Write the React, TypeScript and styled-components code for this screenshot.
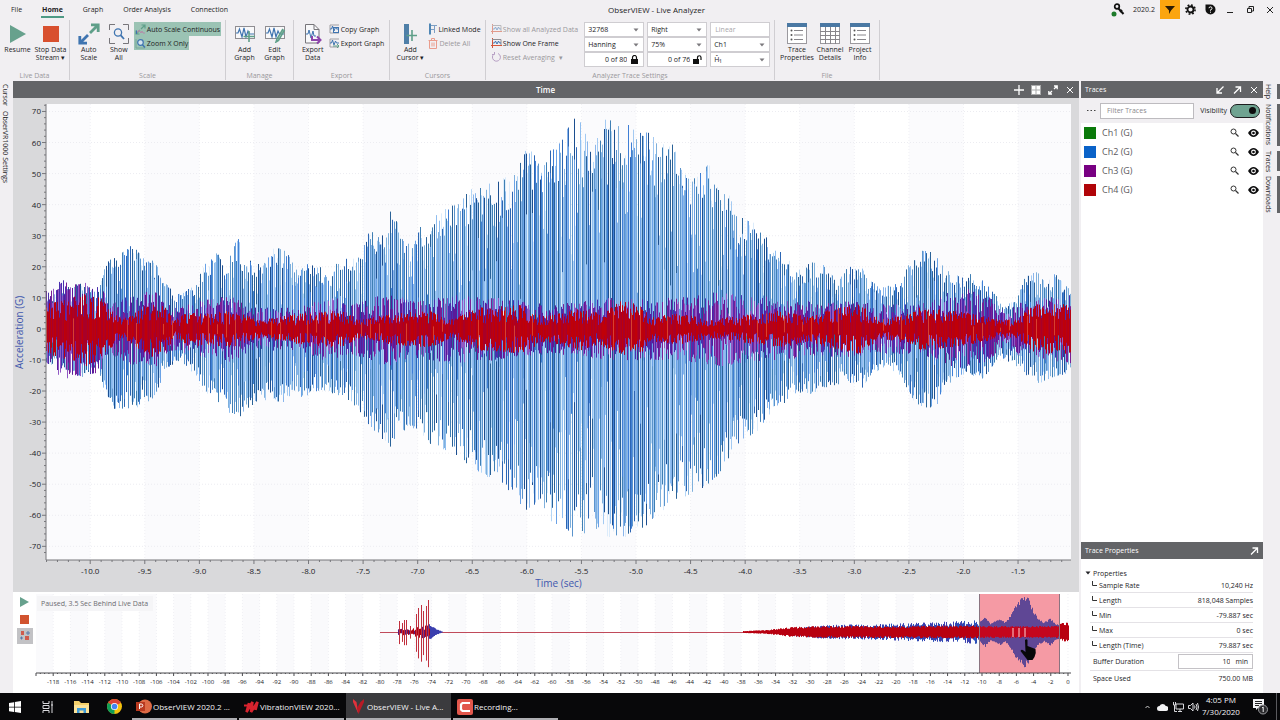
import React from "react";
import styled, { createGlobalStyle, css } from "styled-components";

const GlobalStyle = createGlobalStyle`
  *, *::before, *::after { box-sizing: border-box; }
  body { margin: 0; background: #f1eff2; }
  body, button, input, select { font-family: "Open Sans", "Noto Sans", sans-serif; }
  button, input, select { color: inherit; margin: 0; }
  button { border: 0; padding: 0; background: none; cursor: pointer; }
  svg { display: block; flex: none; }
`;

/* ---------- waveform data ---------- */

type Key = [number, number];

const random = (seed: number) => {
  let s = seed;
  return () => {
    s = (s * 1664525 + 1013904223) >>> 0;
    return s / 4294967296;
  };
};

const sample = (keys: Key[], x: number) => {
  for (let i = 1; i < keys.length; i++) {
    const [x0, v0] = keys[i - 1];
    const [x1, v1] = keys[i];
    if (x <= x1) return v0 + ((v1 - v0) * Math.max(0, x - x0)) / (x1 - x0);
  }
  return keys[keys.length - 1][1];
};

interface BarOptions {
  from: number;
  to: number;
  step: number;
  center: number;
  scale: number;
  top: Key[];
  bottom?: Key[];
  jitter: number;
  seed: number;
  colors: string[];
}

/* One vertical stroke per sample, grouped into a path for each colour. */
const makeBars = (o: BarOptions) => {
  const rnd = random(o.seed);
  const paths = o.colors.map(() => "");
  for (let x = o.from; x < o.to; x += o.step) {
    const a = sample(o.top, x) * (1 - o.jitter * Math.pow(rnd(), 1.4)) * o.scale;
    const b = sample(o.bottom || o.top, x) * (1 - o.jitter * Math.pow(rnd(), 1.4)) * o.scale;
    const c = Math.floor(rnd() * o.colors.length);
    paths[c] += `M${x + 0.5} ${(o.center - a).toFixed(1)}V${(o.center + b).toFixed(1)}`;
  }
  return paths.map((d, i) => ({ d, color: o.colors[i] }));
};

const CH2_TOP: Key[] = [
  [0, 10], [24, 14], [34, 15], [52, 12], [61, 23], [74, 24], [84, 28], [99, 24], [110, 21], [119, 15], [129, 11],
  [139, 12], [149, 15], [159, 21], [171, 25], [180, 20], [191, 30], [199, 22], [209, 22], [216, 20], [225, 26],
  [237, 26], [246, 22], [254, 19], [264, 22], [274, 20], [282, 16], [290, 21], [304, 24], [314, 23], [321, 33],
  [334, 29], [342, 38], [348, 38], [354, 32], [366, 28], [374, 33], [382, 31], [390, 39], [399, 40], [409, 41],
  [424, 45], [441, 49], [454, 49], [466, 49], [474, 54], [482, 60], [494, 59], [510, 58], [520, 64], [530, 69],
  [534, 67], [546, 57], [556, 66], [560, 70], [566, 67], [586, 67], [599, 65], [614, 59], [622, 62], [636, 54],
  [644, 48], [654, 51], [662, 55], [669, 46], [679, 46], [691, 37], [709, 34], [719, 30], [731, 26], [744, 22],
  [754, 19], [766, 22], [784, 20], [792, 16], [801, 20], [815, 20], [822, 16], [832, 14], [844, 14], [854, 15],
  [864, 22], [869, 26], [879, 26], [889, 24], [899, 19], [914, 17], [929, 18], [939, 15], [949, 11], [959, 8],
  [969, 9], [979, 17], [988, 20], [999, 15], [1009, 18], [1019, 14], [1025, 13],
];
const CH2_BOTTOM: Key[] = [
  [0, 11], [36, 16], [52, 12], [59, 23], [69, 26], [86, 26], [101, 24], [110, 21], [119, 13], [134, 10], [149, 15],
  [159, 20], [169, 24], [191, 29], [204, 25], [219, 23], [234, 24], [254, 22], [279, 20], [299, 22], [316, 28],
  [329, 34], [344, 38], [354, 33], [369, 32], [384, 37], [404, 40], [424, 44], [441, 48], [454, 50], [474, 58],
  [494, 59], [504, 62], [519, 64], [531, 69], [544, 63], [560, 67], [579, 67], [599, 64], [614, 58], [622, 59],
  [644, 53], [662, 51], [676, 45], [694, 36], [709, 34], [724, 28], [734, 26], [744, 21], [764, 21], [779, 19],
  [801, 17], [817, 19], [824, 15], [839, 12], [854, 15], [866, 23], [879, 26], [892, 24], [899, 18], [919, 15],
  [937, 16], [954, 9], [974, 13], [989, 18], [1004, 16], [1025, 14],
];
const CH3_KEYS: Key[] = [
  [0, 14], [20, 16], [54, 14], [64, 8], [80, 11], [90, 12], [110, 12], [120, 8], [130, 7], [154, 9], [184, 11],
  [204, 7], [254, 7], [284, 11], [304, 8], [344, 12], [364, 9], [404, 11], [454, 10], [504, 8], [564, 10], [624, 10],
  [674, 12], [704, 11], [764, 9], [804, 9], [834, 8], [874, 8], [904, 12], [924, 13], [944, 10], [957, 6], [974, 9],
  [1024, 11],
];
const CH4_KEYS: Key[] = [
  [0, 8], [24, 10], [40, 12], [54, 10], [66, 6], [76, 3], [90, 6], [106, 9], [119, 7], [129, 3], [144, 6], [159, 5], [184, 6],
  [214, 3], [254, 5], [294, 6], [314, 3], [344, 5], [384, 6], [404, 3], [434, 7], [474, 8], [499, 4], [534, 7],
  [554, 5], [574, 9], [594, 8], [604, 4], [634, 5], [664, 3], [734, 6], [764, 4], [789, 7], [814, 8], [834, 3],
  [864, 5], [874, 7], [904, 6], [924, 5], [954, 3], [969, 3], [989, 8], [1025, 8],
];

const G = { center: 225, scale: 3.107, from: 0, to: 1025 };
const mainBars = [
  ...makeBars({ ...G, from: 1, step: 2, top: CH2_TOP, bottom: CH2_BOTTOM, jitter: 0.75, seed: 7, colors: ["#b4d6f6", "#a4caf2", "#8ab6ec", "#dcecfb"] }),
  ...makeBars({ ...G, step: 2, top: CH2_TOP, bottom: CH2_BOTTOM, jitter: 0.26, seed: 21, colors: ["#2a6298", "#2c66b4", "#3f7fb4", "#5b94cc", "#7fb0dc", "#1c4f90"] }),
  ...makeBars({ ...G, step: 3, top: CH2_TOP, bottom: CH2_BOTTOM, jitter: 0.95, seed: 33, colors: ["#3f7fd6", "#6aa2e6", "#8fbef0"] }),
  ...makeBars({ ...G, step: 1, top: CH3_KEYS, jitter: 0.85, seed: 51, colors: ["#7a1f96", "#4a2fae", "#5a1a9a", "#9058c4"] }),
  ...makeBars({ ...G, step: 1, top: CH4_KEYS, jitter: 0.75, seed: 77, colors: ["#b80010", "#c00008", "#a80028", "#b4001c"] }),
  ...makeBars({ ...G, step: 9, top: CH4_KEYS, jitter: 0.9, seed: 91, colors: ["#d8402f", "#c00008", "#c00008"] }),
];

const O = { center: 38, scale: 1, step: 1 };
const overviewBars = [
  ...makeBars({ ...O, from: 755, to: 943, top: [[755, 4], [790, 7], [840, 8], [900, 10], [943, 12]], jitter: 0.6, seed: 5, colors: ["#2a50b8", "#3a3fae"] }),
  ...makeBars({ ...O, from: 393, to: 407, top: [[393, 8], [400, 3], [407, 0]], jitter: 0.2, seed: 6, colors: ["#3a3fae"] }),
  ...makeBars({ ...O, from: 362, to: 394, top: [[362, 3], [378, 4], [380, 7], [394, 7]], jitter: 0.7, seed: 9, colors: ["#b00014", "#b00014", "#5a1a7a"] }),
  ...makeBars({ ...O, from: 707, to: 1033, top: [[707, 1], [730, 2], [755, 5], [780, 6], [860, 6], [1020, 7], [1026, 10], [1033, 9]], jitter: 0.35, seed: 3, colors: ["#b80010"] }),
];
const selectionBars = [
  ...makeBars({ ...O, from: 943, to: 1024, top: [[943, 10], [949, 15], [954, 9], [964, 13], [969, 10], [976, 20], [981, 30], [987, 36], [992, 34], [997, 22], [1002, 13], [1008, 10], [1014, 14], [1019, 9], [1024, 7]], jitter: 0.18, seed: 14, colors: ["#5f4795"] }),
  ...makeBars({ ...O, from: 943, to: 1024, top: [[943, 6], [1024, 6]], jitter: 0.25, seed: 15, colors: ["#c4061e"] }),
];
const SPIKES: Key[] = [[363, 11], [366, 9], [368, 12], [370, 12], [374, 6], [380, 18], [382, 24], [385, 27], [387, 21], [390, 26], [392, 32]];

/* ---------- shell ---------- */

const Shell = styled.div`
  min-height: 100vh;
  display: flex;
  flex-direction: column;
  background: #f1eff2;
  color: #1d1d1f;
  font-size: 7px;
  line-height: 9px;
`;

const TitleBar = styled.header`
  display: flex;
  align-items: stretch;
  height: 20px;
`;

const Tabs = styled.nav`
  display: flex;
  gap: 18px;
  padding-left: 10px;
  align-items: stretch;
`;

const Tab = styled.button<{ $active?: boolean }>`
  font-size: 7px;
  line-height: 14px;
  padding: 3px 1px 0;
  margin-bottom: 2px;
  border-bottom: 2px solid ${(p) => (p.$active ? "#4f9a85" : "transparent")};
  font-weight: ${(p) => (p.$active ? 700 : 400)};
`;

const WindowTitle = styled.h1`
  flex: 1;
  margin: 0;
  padding-right: 24px;
  text-align: center;
  font-size: 8px;
  line-height: 20px;
  font-weight: 400;
`;

const WindowTools = styled.div`
  display: flex;
  align-items: stretch;
  height: 19px;
`;

const ToolCell = styled.button<{ $hot?: boolean }>`
  width: 20px;
  display: flex;
  align-items: center;
  justify-content: center;
  background: ${(p) => (p.$hot ? "#fba50f" : "transparent")};
`;

const Version = styled.span`
  width: 32px;
  text-align: center;
  line-height: 20px;
`;

/* ---------- ribbon ---------- */

const Ribbon = styled.div`
  display: flex;
  height: 61px;
  padding-bottom: 1px;
`;

const Group = styled.section<{ $w: number }>`
  width: ${(p) => p.$w}px;
  display: flex;
  flex-direction: column;
  justify-content: space-between;
  border-right: 1px solid #d0ced2;
`;

const GroupBody = styled.div`
  display: flex;
  justify-content: center;
  padding-top: 2px;
`;

const GroupName = styled.h2`
  margin: 0;
  font-size: 7px;
  line-height: 8px;
  font-weight: 400;
  text-align: center;
  color: #9a989c;
`;

const BigButton = styled.button<{ $w?: number }>`
  width: ${(p) => p.$w || 30}px;
  display: flex;
  flex-direction: column;
  align-items: center;
  font-size: 7px;
  line-height: 8px;
  white-space: pre-line;
`;

const IconSlot = styled.span`
  height: 24px;
  padding-bottom: 1px;
  display: flex;
  align-items: center;
  justify-content: center;
`;

const SmallStack = styled.div`
  display: flex;
  flex-direction: column;
  align-items: flex-start;
`;

const SmallButton = styled.button<{ $on?: boolean; $muted?: boolean }>`
  display: flex;
  align-items: center;
  gap: 1px;
  height: 14px;
  padding: 0 1px;
  font-size: 7px;
  white-space: nowrap;
  color: ${(p) => (p.$muted ? "#9a989c" : "inherit")};
  ${(p) => p.$on && css`background: #9bc3b4;`}
`;

const Fields = styled.div`
  display: grid;
  grid-template-columns: repeat(3, 60px);
  grid-auto-rows: 15px;
  column-gap: 3px;
  margin-left: 5px;
`;

const Field = styled.label`
  position: relative;
  display: flex;
  align-items: center;
  background: #fff;
  border: 1px solid #cfcdd1;
  svg { position: absolute; right: 4px; pointer-events: none; }
`;

const Select = styled.select`
  appearance: none;
  width: 100%;
  border: 0;
  padding: 0 3px;
  background: transparent;
  font-size: 7px;
  line-height: 13px;
`;

const FieldInput = styled.input<{ $plain?: boolean }>`
  width: 100%;
  min-width: 0;
  border: 0;
  padding: 0 ${(p) => (p.$plain ? 4 : 16)}px 0 4px;
  background: transparent;
  font-size: 7px;
  line-height: 13px;
  text-align: ${(p) => (p.$plain ? "left" : "right")};
  color: ${(p) => (p.$plain ? "#a9a7ab" : "inherit")};
`;

/* ---------- work area ---------- */

const Work = styled.main`
  flex: 1;
  display: flex;
`;

const Rail = styled.nav<{ $w: number }>`
  width: ${(p) => p.$w}px;
  display: flex;
  flex-direction: column;
  gap: 5px;
  padding-top: 3px;
`;

const RailTab = styled.button<{ $bar?: boolean; $h: number }>`
  writing-mode: vertical-rl;
  height: ${(p) => p.$h}px;
  width: 100%;
  font-size: 7px;
  line-height: 11px;
  text-align: left;
  display: flex;
  flex-direction: column;
  align-items: flex-start;
  justify-content: flex-end;
  white-space: nowrap;
  border-right: ${(p) => (p.$bar ? "3px solid #636467" : "0")};
`;

const Center = styled.div`
  flex: 1;
  min-width: 0;
  display: flex;
  flex-direction: column;
  background: #fff;
`;

const PanelBar = styled.header`
  height: 17px;
  display: flex;
  align-items: center;
  background: #636467;
  color: #fff;
  padding: 0 1px 0 4px;
`;

const PanelTitle = styled.h2<{ $center?: boolean }>`
  flex: 1;
  margin: 0;
  font-size: ${(p) => (p.$center ? 8 : 7)}px;
  line-height: 17px;
  font-weight: ${(p) => (p.$center ? 600 : 400)};
  text-align: ${(p) => (p.$center ? "center" : "left")};
  padding-left: ${(p) => (p.$center ? 64 : 0)}px;
`;

const BarButton = styled.button`
  width: 17px;
  height: 17px;
  display: flex;
  align-items: center;
  justify-content: center;
`;

const ChartFrame = styled.div`
  flex: 1;
  display: flex;
  background: #d9d9db;
  padding: 6px 8px 32px 0;
`;

const YTitle = styled.div`
  width: 33px;
  writing-mode: vertical-rl;
  transform: rotate(180deg);
  display: flex;
  flex-direction: column;
  align-items: center;
  justify-content: flex-start;
  font-size: 10px;
  line-height: 12px;
  color: #3f57ae;
`;

const Plot = styled.svg`
  flex: 1;
  min-width: 0;
  overflow: visible;
`;

const AxisText = styled.text<{ $small?: boolean; $blue?: boolean }>`
  font-family: "Open Sans", "Noto Sans", sans-serif;
  font-size: ${(p) => (p.$small ? 6 : p.$blue ? 10 : 8)}px;
  fill: ${(p) => (p.$blue ? "#3f57ae" : "#222226")};
`;

const Overview = styled.div`
  position: relative;
  display: flex;
  height: 101px;
  padding: 2px 8px 20px 0;
  background: #fff;
`;

const OverviewButtons = styled.div`
  width: 23px;
  display: flex;
  flex-direction: column;
  align-items: center;
  gap: 1px;
`;

const OverviewButton = styled.button<{ $on?: boolean }>`
  width: 16px;
  height: 16px;
  display: flex;
  align-items: center;
  justify-content: center;
  background: ${(p) => (p.$on ? "#c2c2c5" : "transparent")};
`;

const Status = styled.div`
  position: absolute;
  left: 24px;
  top: 4px;
  padding: 0 5px 0 4px;
  line-height: 15px;
  background: #f5f5f7;
  color: #6b6b70;
`;

/* ---------- side panel ---------- */

const Side = styled.aside`
  width: 184px;
  display: flex;
  flex-direction: column;
  border-left: 2px solid #f1eff2;
  background: #fff;
`;

const FilterRow = styled.div`
  display: flex;
  align-items: center;
  height: 25px;
  padding: 0 3px 0 6px;
  background: #f1eff2;
`;

const FilterInput = styled.input`
  flex: 1;
  min-width: 0;
  height: 16px;
  margin: 0 6px 0 4px;
  padding: 0 6px;
  border: 1px solid #bdbbbf;
  background: #fff;
  font-size: 7px;
  &::placeholder { color: #8b898d; opacity: 1; }
`;

const Switch = styled.label`
  display: flex;
  align-items: center;
  gap: 3px;
  font-size: 7px;
`;

const SwitchInput = styled.input`
  appearance: none;
  margin: 0;
  width: 30px;
  height: 14px;
  border: 1px solid #1d1d1f;
  border-radius: 7px;
  background: #6fa391;
  display: flex;
  align-items: center;
  justify-content: flex-end;
  padding-right: 3px;
  &::after {
    content: "";
    width: 7px;
    height: 7px;
    border-radius: 50%;
    background: #0c0c0d;
  }
`;

const TraceList = styled.ul`
  flex: 1;
  margin: 0;
  padding: 0 1px 0 3px;
  list-style: none;
`;

const TraceRow = styled.li`
  display: flex;
  align-items: center;
  gap: 2px;
  height: 19px;
  font-size: 9px;
  color: #5c5a5e;
`;

const Swatch = styled.span<{ $color: string }>`
  width: 12px;
  height: 12px;
  margin-right: 4px;
  background: ${(p) => p.$color};
`;

const TraceName = styled.span`
  flex: 1;
`;

const Properties = styled.div`
  height: 134px;
  padding: 9px 10px 0 4px;
`;

const TreeToggle = styled.button`
  display: flex;
  align-items: center;
  gap: 2px;
  height: 10px;
  font-size: 7px;
`;

const PropertyList = styled.dl`
  margin: 0;
  padding-left: 5px;
`;

const Property = styled.div<{ $tall?: boolean }>`
  display: flex;
  align-items: center;
  height: ${(p) => (p.$tall ? 18 : 15)}px;
  padding-left: 3px;
  border-bottom: 1px solid #e4e2e6;
  &:last-child { border-bottom: 0; }
  svg { margin: -3px 2px 0 -2px; }
  dt { flex: 1; }
  dd { margin: 0; }
`;

const Duration = styled.label`
  display: flex;
  align-items: center;
  width: 75px;
  height: 15px;
  padding-right: 4px;
  border: 1px solid #c4c2c6;
`;

const DurationInput = styled.input`
  flex: 1;
  min-width: 0;
  border: 0;
  padding: 0 5px 0 0;
  text-align: right;
  font-size: 7px;
`;

/* ---------- task bar ---------- */

const TaskBar = styled.footer`
  display: flex;
  align-items: stretch;
  height: 27px;
  background: #08080a;
  color: #f2f2f4;
  font-size: 8px;
`;

const Launcher = styled.button`
  width: 33px;
  display: flex;
  align-items: center;
  justify-content: center;
  padding-right: 3px;
`;

const Task = styled.button<{ $active?: boolean }>`
  width: 105px;
  display: flex;
  align-items: center;
  gap: 1px;
  padding: 2px 4px 0;
  margin-right: 2px;
  font-size: 8px;
  white-space: nowrap;
  background: ${(p) => (p.$active ? "#3b3b3e" : "transparent")};
  border-bottom: 2px solid #aeaeb2;
`;

const Tray = styled.div`
  margin-left: auto;
  display: flex;
  align-items: center;
`;

const Clock = styled.time`
  width: 44px;
  text-align: center;
  line-height: 12px;
  padding-bottom: 1px;
`;

const Bell = styled(ToolCell)`
  width: 33px;
`;

const ShowDesktop = styled.button`
  width: 4px;
  height: 27px;
  border-left: 1px solid #5a5a5e;
`;

/* ---------- icons ---------- */

const GREEN = "#5f9f89";
const BLUE = "#3f74b0";

const Arrow = ({ color = "#7b797d" }: { color?: string }) => (
  <svg width="6" height="4" viewBox="0 0 6 4"><path d="M0.5 0.5h5L3 3.5z" fill={color} /></svg>
);
const AutoScaleIcon = () => (
  <svg width="22" height="22" viewBox="0 0 22 22" fill="none" strokeWidth="2.8">
    <path d="M12 10L20 2M13 1.800h7.200V9" stroke={GREEN} />
    <path d="M10 12L2 20M9 20.200H1.800V13" stroke={BLUE} />
  </svg>
);
const SmallScaleIcon = () => (
  <svg width="11" height="11" viewBox="0 0 11 11" fill="none">
    <path d="M6 5L10 1M6.500 1H10v3.500M5 6L1 10M1 6.500V10h3.500" stroke={GREEN} strokeWidth="1.200" />
    <path d="M1 8h2l1-2 2 3 1-2 1 2h2" stroke="#b58aa8" />
    <path d="M1.500 6.500V10" stroke={BLUE} />
  </svg>
);
const ShowAllIcon = () => (
  <svg width="22" height="22" viewBox="0 0 22 22" fill="none">
    <path d="M1.500 7V1.500H7M15 1.500h5.500V7M20.500 15v5.500H15M7 20.500H1.500V15" stroke="#77757a" />
    <circle cx="10" cy="9.500" r="3.600" stroke={BLUE} strokeWidth="1.300" />
    <path d="M12.600 12.200L16 16" stroke={BLUE} strokeWidth="1.800" />
  </svg>
);
const ZoomIcon = () => (
  <svg width="11" height="11" viewBox="0 0 11 11" fill="none" stroke={BLUE}>
    <path d="M1 10V1M1 10h9" stroke="#7aa79a" />
    <circle cx="5.500" cy="4.500" r="2.800" strokeWidth="1.200" fill="#d5e4ee" />
    <path d="M7.500 6.700L10 9.500" strokeWidth="1.500" />
  </svg>
);
const GraphIcon = ({ edit }: { edit?: boolean }) => (
  <svg width="22" height="18" viewBox="0 0 22 18" fill="none">
    <rect x="1.500" y="1.500" width="19" height="12" stroke="#8f8d92" fill="#f8f8fa" />
    <path d="M2 8h2l1.500-4L8 12l2-9 2 9 2-6 1.500 3H20" stroke={BLUE} strokeWidth="1.200" />
    {edit ? <path d="M19 4l-6 10-1 3 2.500-1.500L20.500 5" stroke={GREEN} strokeWidth="1.600" /> : <path d="M15 6v11M9.500 11.500h11.500" stroke={GREEN} strokeWidth="1.600" />}
  </svg>
);
const ExportDataIcon = () => (
  <svg width="18" height="22" viewBox="0 0 18 22" fill="none">
    <path d="M1.500 1.500H10L15 6.500V20H1.500z" stroke="#77757a" fill="#f8f8fa" />
    <path d="M10 1.500V6.500H15" stroke="#77757a" />
    <path d="M2 11h2l1-4 2 8 2-7 1 5h2" stroke={BLUE} />
    <path d="M8 13v4h8M13 13.500l3.500 3.500-3.500 3.500" stroke="#8d45ab" strokeWidth="2" />
  </svg>
);
const SmallGraphIcon = ({ tone, arrow }: { tone: string; arrow?: boolean }) => (
  <svg width="11" height="10" viewBox="0 0 11 10" fill="none">
    <path d="M1 9V1H10M1 9h9" stroke="#a09ea3" />
    <path d="M1 5h1.500l1-3 1.500 5 1.500-4 1 2H10" stroke={BLUE} />
    {arrow ? <path d="M4 8h6M8 6l2 2-2 2" stroke={tone} /> : <rect x="4.500" y="3.500" width="5" height="5" stroke={tone} />}
  </svg>
);
const FrameIcon = ({ muted }: { muted?: boolean }) => (
  <svg width="11" height="10" viewBox="0 0 11 10" fill="none" opacity={muted ? 0.55 : 1}>
    <path d="M1.500 0V10M0 7.500h11" stroke="#d4553a" />
    <path d="M1 1.500h9V7" stroke="#8f8d92" />
    <path d="M2 5h1.500l1-2 1.500 3 1.500-3 1 2H10" stroke={BLUE} />
  </svg>
);
const AddCursorIcon = () => (
  <svg width="14" height="22" viewBox="0 0 14 22"><rect x="1" y="1" width="5" height="20" fill="#4f7fa8" /><path d="M9 7v11M3.500 12.500H14" stroke={GREEN} strokeWidth="1.600" /></svg>
);
const LinkedIcon = () => (
  <svg width="9" height="12" viewBox="0 0 9 12" fill="none"><path d="M2 0.500v11" stroke="#4f86b5" strokeWidth="2" /><path d="M3 2.500h6M3 6.500h4M6.500 2v8" stroke="#7d9fc4" /></svg>
);
const TrashIcon = () => (
  <svg width="10" height="11" viewBox="0 0 10 11" fill="none" stroke="#ea9c8c"><path d="M0.500 2.500h9M3.500 2V0.500h3V2M1.500 3v7.500h7V3M4 4.500v4M6 4.500v4" /></svg>
);
const ResetIcon = () => (
  <svg width="11" height="10" viewBox="0 0 11 10" fill="none" stroke="#b79fc4"><path d="M3 2a4 4 0 1 0 4-.5M3.500 0v2.500H1" /></svg>
);
const LockIcon = ({ open }: { open?: boolean }) => (
  <svg width="9" height="9" viewBox="0 0 9 9" fill="none">
    <rect x={open ? 0 : 1} y="4" width={open ? 6 : 7} height="5" fill="#111" />
    <path d={open ? "M4.500 4V2.500a1.700 1.700 0 0 1 3.500 0V5" : "M2.500 4V2.500a2 2 0 0 1 4 0V4"} stroke="#111" strokeWidth="1.200" />
  </svg>
);
const SheetIcon = ({ grid }: { grid?: boolean }) => (
  <svg width="20" height="21" viewBox="0 0 20 21" fill="none">
    <rect x="0.500" y="0.500" width="19" height="20" fill="#fff" stroke="#9b999e" />
    <rect width="20" height="4" fill="#4a78a3" />
    {grid ? <path d="M0 8.500h20M0 12.500h20M0 16.500h20M5.500 4v17M10.500 4v17M15.500 4v17" stroke="#88868b" /> : (
      <>
        <path d="M7 7.500h9M7 12h9M7 16.500h9" stroke="#88868b" />
        <circle cx="4.500" cy="7.500" r="1" fill="#555" /><circle cx="4.500" cy="12" r="1" fill="#555" /><circle cx="4.500" cy="16.500" r="1" fill="#555" />
      </>
    )}
  </svg>
);
const DiagonalIcon = ({ kind }: { kind: "in" | "out" | "both" }) => (
  <svg width="10" height="10" viewBox="0 0 10 10" fill="none" stroke="#fff" strokeWidth="1.300">
    {kind === "in" && <path d="M8.500 1.500L2.500 7.500M2 3v5h5" />}
    {kind === "out" && <path d="M2 8.500L8 2.500M3.500 2h5v5" />}
    {kind === "both" && <path d="M6 4L9 1M6 1h3.200v3.200M4 6L1 9M4 9H.8V6" />}
  </svg>
);
const CloseIcon = ({ color = "#fff" }: { color?: string }) => (
  <svg width="8" height="8" viewBox="0 0 8 8" stroke={color} fill="none"><path d="M1 1l6 6M7 1L1 7" /></svg>
);
const SearchIcon = () => (
  <svg width="9" height="9" viewBox="0 0 9 9" fill="none" stroke="#333"><circle cx="3.500" cy="3.500" r="2.500" /><path d="M5.500 5.500L8.500 8.500" strokeWidth="1.300" /></svg>
);
const EyeIcon = () => (
  <svg width="11" height="8" viewBox="0 0 11 8"><path d="M0 4Q2.500 0 5.500 0T11 4Q8.500 8 5.500 8T0 4z" fill="#0c0c0d" /><circle cx="5.500" cy="4" r="2.400" fill="#fff" /><circle cx="5.500" cy="4" r="1.300" fill="#0c0c0d" /></svg>
);
const BranchIcon = () => (
  <svg width="6" height="6" viewBox="0 0 6 6" fill="none" stroke="#333"><path d="M1.500 0v4.500H6" /></svg>
);

/* ---------- sections ---------- */

const traces = [
  { name: "Ch1 (G)", color: "#0a7a0a" },
  { name: "Ch2 (G)", color: "#0a62c8" },
  { name: "Ch3 (G)", color: "#780082" },
  { name: "Ch4 (G)", color: "#b00408" },
];

const properties = [
  ["Sample Rate", "10,240 Hz"],
  ["Length", "818,048 Samples"],
  ["Min", "-79.887 sec"],
  ["Max", "0 sec"],
  ["Length (Time)", "79.887 sec"],
];

const Drop = ({ label, value }: { label: string; value: string }) => (
  <Field>
    <Select aria-label={label} defaultValue={value}><option>{value}</option></Select>
    <Arrow />
  </Field>
);

const range = (n: number) => Array.from({ length: n }, (_, i) => i);

const timeX = (t: number) => ((t + 10.405) / 9.39) * 100;
const gY = (g: number) => ((72.4 - g) / 146.8) * 100;
const overX = (t: number) => ((t + 120) / 120.35) * 100;

const MainChart = () => (
  <ChartFrame>
    <YTitle>Acceleration (G)</YTitle>
    <Plot role="img" aria-label="Acceleration over time">
      <rect width="100%" height="100%" fill="#fff" />
      {range(10).map((i) => {
        const start = Math.max(0, timeX(-10.5 + i));
        return <rect key={i} x={`${start}%`} width={`${Math.min(100, timeX(-10 + i)) - start}%`} height="100%" fill="#fbfbfd" />;
      })}
      {range(18).map((i) => <line key={i} x1={`${timeX(-10 + i / 2)}%`} x2={`${timeX(-10 + i / 2)}%`} y1="0" y2="100%" stroke="#f0f0f4" strokeDasharray="1 2" />)}
      {range(15).map((i) => <line key={i} x1="0" x2="100%" y1={`${gY(70 - i * 10)}%`} y2={`${gY(70 - i * 10)}%`} stroke="#ececf1" strokeDasharray="1 2" />)}
      <svg width="100%" height="100%" viewBox="0 0 1025 456" preserveAspectRatio="none">
        {mainBars.map((b, i) => <path key={i} d={b.d} stroke={b.color} />)}
      </svg>
      <line x1="0" x2="0" y1="0" y2="100%" stroke="#77777b" />
      <line x1="0" x2="100%" y1="100%" y2="100%" stroke="#77777b" />
      {range(73).map((i) => <line key={i} x1={i % 5 === 1 ? -4 : -2} x2="0" y1={`${gY(72 - i * 2)}%`} y2={`${gY(72 - i * 2)}%`} stroke="#77777b" />)}
      <svg y="100%" width="100%" height="24" overflow="visible">
        {range(94).map((i) => <line key={i} x1={`${timeX(-10.4 + i / 10)}%`} x2={`${timeX(-10.4 + i / 10)}%`} y1="0" y2={i % 5 === 4 ? 4 : 2} stroke="#77777b" />)}
        {range(18).map((i) => <AxisText key={i} x={`${timeX(-10 + i / 2)}%`} y="14" textAnchor="middle">{(-10 + i / 2).toFixed(1)}</AxisText>)}
        <AxisText $blue x="50%" y="27" textAnchor="middle">Time (sec)</AxisText>
      </svg>
      {range(15).map((i) => <AxisText key={i} x="-5" y={`${gY(70 - i * 10)}%`} dy="3" textAnchor="end">{70 - i * 10}</AxisText>)}
    </Plot>
  </ChartFrame>
);

const OverviewChart = () => (
  <Plot role="img" aria-label="Recording overview">
    {range(30).map((i) => <rect key={i} x={`${overX(-120 + i * 4)}%`} width={`${(2 / 120.35) * 100}%`} height="100%" fill="#fafafc" />)}
    {range(60).map((i) => <line key={i} x1={`${overX(-118 + i * 2)}%`} x2={`${overX(-118 + i * 2)}%`} y1="0" y2="100%" stroke="#f0f0f4" strokeDasharray="1 2" />)}
    <svg width="100%" height="100%" viewBox="0 0 1035 79" preserveAspectRatio="none">
      <path d="M344 38.500H1033" stroke="#c04a5a" />
      {overviewBars.map((b, i) => <path key={i} d={b.d} stroke={b.color} />)}
      {SPIKES.map(([x, a]) => <path key={x} d={`M${x + 0.5} ${38 - a}V${38 + a * 1.1}`} stroke="#c0303e" />)}
      <rect x="943" y="0" width="81" height="79" fill="#f59aa4" />
      {selectionBars.map((b, i) => <path key={i} d={b.d} stroke={b.color} />)}
      <path d="M943.500 0V79M1023.500 0V79" stroke="#8a7480" />
      <path d="M977 34v9M983 34v9M989 34v9" stroke="#ffd3d3" />
      <path d="M989 46q1.500-1.500 2.500 0v6l8 3q1 4-1 8l-2 3h-5l-7-9q1-2 3-.5l2 1.500z" fill="#08080a" />
    </svg>
    <line x1="0" x2="100%" y1="100%" y2="100%" stroke="#4a4a4e" />
    <svg y="100%" width="100%" height="20" overflow="visible">
      {range(241).map((i) => <line key={i} x1={`${overX(-120 + i / 2)}%`} x2={`${overX(-120 + i / 2)}%`} y1="0" y2={i % 4 === 0 ? 3 : 1} stroke="#4a4a4e" />)}
      {range(60).map((i) => <AxisText $small key={i} x={`${overX(-118 + i * 2)}%`} y="11" textAnchor="middle">{-118 + i * 2}</AxisText>)}
    </svg>
  </Plot>
);

export default function App() {
  return (
    <>
      <GlobalStyle />
      <Shell>
        <TitleBar>
          <Tabs>
            <Tab>File</Tab>
            <Tab $active>Home</Tab>
            <Tab>Graph</Tab>
            <Tab>Order Analysis</Tab>
            <Tab>Connection</Tab>
          </Tabs>
          <WindowTitle>ObserVIEW - Live Analyzer</WindowTitle>
          <WindowTools>
            <ToolCell aria-label="License">
              <svg width="14" height="14" viewBox="0 0 14 14" fill="none">
                <circle cx="6" cy="3.500" r="2.300" stroke="#111" strokeWidth="1.700" />
                <path d="M7.500 5.500L12.500 11M9 9l2-2" stroke="#111" strokeWidth="2" />
                <circle cx="3" cy="11" r="2.500" fill="#1d7a2a" />
              </svg>
            </ToolCell>
            <Version>2020.2</Version>
            <ToolCell $hot aria-label="Filter">
              <svg width="10" height="10" viewBox="0 0 10 10"><path d="M0 1h10L6 5.500L4 9V5.500z" fill="#2b1c05" /></svg>
            </ToolCell>
            <ToolCell aria-label="Options">
              <svg width="11" height="11" viewBox="0 0 11 11" fill="none" stroke="#111">
                <circle cx="5.500" cy="5.500" r="3" strokeWidth="1.800" />
                <circle cx="5.500" cy="5.500" r="4.600" strokeWidth="1.600" strokeDasharray="1.800 1.810" />
              </svg>
            </ToolCell>
            <ToolCell aria-label="Help">
              <svg width="11" height="11" viewBox="0 0 11 11" fill="none">
                <path d="M0.500 0.500h5a5 5 0 1 1-5 5z" fill="#111" />
                <path d="M4 4.200a1.500 1.500 0 1 1 1.500 1.600v.9M5.500 7.700v1" stroke="#fff" />
              </svg>
            </ToolCell>
            <ToolCell aria-label="Minimize"><svg width="8" height="8" viewBox="0 0 8 8"><path d="M1 6.500h6" stroke="#222" /></svg></ToolCell>
            <ToolCell aria-label="Restore"><svg width="8" height="8" viewBox="0 0 8 8" fill="none" stroke="#222"><path d="M1.500 2.500h4v4h-4zM3 2V.500h4.500V5H6" /></svg></ToolCell>
            <ToolCell aria-label="Close"><CloseIcon color="#222" /></ToolCell>
          </WindowTools>
        </TitleBar>

        <Ribbon>
          <Group $w={70}>
            <GroupBody>
              <BigButton $w={32}><IconSlot><svg width="16" height="18" viewBox="0 0 16 18"><path d="M0 0l16 9-16 9z" fill="#67a18d" /></svg></IconSlot>Resume</BigButton>
              <BigButton $w={34}><IconSlot><svg width="16" height="16" viewBox="0 0 16 16"><rect width="16" height="16" fill="#d8502f" /></svg></IconSlot>{"Stop Data\nStream ▾"}</BigButton>
            </GroupBody>
            <GroupName>Live Data</GroupName>
          </Group>
          <Group $w={156}>
            <GroupBody>
              <BigButton><IconSlot><AutoScaleIcon /></IconSlot>{"Auto\nScale"}</BigButton>
              <BigButton><IconSlot><ShowAllIcon /></IconSlot>{"Show\nAll"}</BigButton>
              <SmallStack>
                <SmallButton $on><SmallScaleIcon />Auto Scale Continuous</SmallButton>
                <SmallButton $on><ZoomIcon />Zoom X Only</SmallButton>
              </SmallStack>
            </GroupBody>
            <GroupName>Scale</GroupName>
          </Group>
          <Group $w={68}>
            <GroupBody>
              <BigButton><IconSlot><GraphIcon /></IconSlot>{"Add\nGraph"}</BigButton>
              <BigButton><IconSlot><GraphIcon edit /></IconSlot>{"Edit\nGraph"}</BigButton>
            </GroupBody>
            <GroupName>Manage</GroupName>
          </Group>
          <Group $w={96}>
            <GroupBody>
              <BigButton><IconSlot><ExportDataIcon /></IconSlot>{"Export\nData"}</BigButton>
              <SmallStack>
                <SmallButton><SmallGraphIcon tone={BLUE} />Copy Graph</SmallButton>
                <SmallButton><SmallGraphIcon tone={GREEN} arrow />Export Graph</SmallButton>
              </SmallStack>
            </GroupBody>
            <GroupName>Export</GroupName>
          </Group>
          <Group $w={96}>
            <GroupBody>
              <BigButton $w={34}><IconSlot><AddCursorIcon /></IconSlot>{"Add\nCursor ▾"}</BigButton>
              <SmallStack>
                <SmallButton><LinkedIcon />Linked Mode</SmallButton>
                <SmallButton $muted><TrashIcon />Delete All</SmallButton>
              </SmallStack>
            </GroupBody>
            <GroupName>Cursors</GroupName>
          </Group>
          <Group $w={289}>
            <GroupBody>
              <SmallStack>
                <SmallButton $muted><FrameIcon muted />Show all Analyzed Data</SmallButton>
                <SmallButton><FrameIcon />Show One Frame</SmallButton>
                <SmallButton $muted><ResetIcon />Reset Averaging &nbsp;▾</SmallButton>
              </SmallStack>
              <Fields>
                <Drop label="Lines" value="32768" />
                <Drop label="Alignment" value="Right" />
                <Field><FieldInput $plain aria-label="Scale" defaultValue="Linear" disabled /></Field>
                <Drop label="Window" value="Hanning" />
                <Drop label="Overlap" value="75%" />
                <Drop label="Reference channel" value="Ch1" />
                <Field><FieldInput aria-label="Frames" defaultValue="0 of 80" /><LockIcon /></Field>
                <Field><FieldInput aria-label="Averages" defaultValue="0 of 76" /><LockIcon open /></Field>
                <Drop label="Estimator" value="Ĥ₁" />
              </Fields>
            </GroupBody>
            <GroupName>Analyzer Trace Settings</GroupName>
          </Group>
          <Group $w={105}>
            <GroupBody>
              <BigButton $w={36}><IconSlot><SheetIcon /></IconSlot>{"Trace\nProperties"}</BigButton>
              <BigButton><IconSlot><SheetIcon grid /></IconSlot>{"Channel\nDetails"}</BigButton>
              <BigButton><IconSlot><SheetIcon /></IconSlot>{"Project\nInfo"}</BigButton>
            </GroupBody>
            <GroupName>File</GroupName>
          </Group>
        </Ribbon>

        <Work>
          <Rail $w={13}>
            <RailTab $h={22}>Cursor</RailTab>
            <RailTab $h={74}>ObserVR1000 Settings</RailTab>
          </Rail>

          <Center>
            <PanelBar>
              <PanelTitle $center>Time</PanelTitle>
              <BarButton aria-label="Add"><svg width="10" height="10" viewBox="0 0 10 10"><path d="M5 0v10M0 5h10" stroke="#fff" strokeWidth="1.300" /></svg></BarButton>
              <BarButton aria-label="Layout"><svg width="10" height="10" viewBox="0 0 10 10" fill="#fff"><path d="M0 0h10v10H0z" opacity=".45" /><path d="M1 1h3.500v3.500H1zM5.500 1H9v3.500H5.500zM1 5.500h3.500V9H1zM5.500 5.500H9V9H5.500z" /></svg></BarButton>
              <BarButton aria-label="Expand"><DiagonalIcon kind="both" /></BarButton>
              <BarButton aria-label="Close graph"><CloseIcon /></BarButton>
            </PanelBar>
            <MainChart />
            <Overview>
              <OverviewButtons>
                <OverviewButton aria-label="Resume"><svg width="9" height="10" viewBox="0 0 9 10"><path d="M0 0l9 5-9 5z" fill="#67a18d" /></svg></OverviewButton>
                <OverviewButton aria-label="Stop"><svg width="9" height="9" viewBox="0 0 9 9"><rect width="9" height="9" fill="#d1532f" /></svg></OverviewButton>
                <OverviewButton $on aria-label="Markers"><svg width="12" height="12" viewBox="0 0 12 12"><path d="M2 1h3v4H2zM6 6h4v4H6z" fill="#cf5a4c" /><path d="M7 3h4M9 1v4M1 8h3M2.500 6.500v3" stroke="#5a78a8" /></svg></OverviewButton>
              </OverviewButtons>
              <OverviewChart />
              <Status>Paused, 3.5 Sec Behind Live Data</Status>
            </Overview>
          </Center>

          <Side>
            <PanelBar>
              <PanelTitle>Traces</PanelTitle>
              <BarButton aria-label="Dock"><DiagonalIcon kind="in" /></BarButton>
              <BarButton aria-label="Undock"><DiagonalIcon kind="out" /></BarButton>
              <BarButton aria-label="Close traces"><CloseIcon /></BarButton>
            </PanelBar>
            <FilterRow>
              <button aria-label="More"><svg width="9" height="3" viewBox="0 0 9 3" fill="#444"><path d="M0 1h1.500v1H0zM3.500 1H5v1H3.500zM7 1h1.500v1H7z" /></svg></button>
              <FilterInput type="text" aria-label="Filter traces" placeholder="Filter Traces" />
              <Switch>Visibility<SwitchInput type="checkbox" defaultChecked /></Switch>
            </FilterRow>
            <TraceList>
              {traces.map((t) => (
                <TraceRow key={t.name}>
                  <Swatch $color={t.color} />
                  <TraceName>{t.name}</TraceName>
                  <BarButton aria-label={`Find ${t.name}`}><SearchIcon /></BarButton>
                  <BarButton aria-label={`Show ${t.name}`}><EyeIcon /></BarButton>
                </TraceRow>
              ))}
            </TraceList>
            <PanelBar>
              <PanelTitle>Trace Properties</PanelTitle>
              <BarButton aria-label="Undock properties"><DiagonalIcon kind="out" /></BarButton>
            </PanelBar>
            <Properties>
              <TreeToggle><Arrow color="#222226" />Properties</TreeToggle>
              <PropertyList>
                {properties.map(([name, value]) => (
                  <Property key={name}><BranchIcon /><dt>{name}</dt><dd>{value}</dd></Property>
                ))}
                <Property $tall>
                  <dt>Buffer Duration</dt>
                  <dd><Duration><DurationInput aria-label="Buffer Duration" defaultValue="10" />min</Duration></dd>
                </Property>
                <Property><dt>Space Used</dt><dd>750.00 MB</dd></Property>
              </PropertyList>
            </Properties>
          </Side>

          <Rail $w={17}>
            <RailTab $bar $h={15}>Help</RailTab>
            <RailTab $bar $h={42}>Notifications</RailTab>
            <RailTab $bar $h={20}>Traces</RailTab>
            <RailTab $bar $h={37}>Downloads</RailTab>
          </Rail>
        </Work>

        <TaskBar>
          <Launcher aria-label="Start"><svg width="12" height="12" viewBox="0 0 12 12" fill="#fff"><path d="M0 2l5-.8v4.500H0zM5.800 1L12 0v5.700H5.800zM0 6.400h5V11l-5-.8zM5.800 6.400H12V12l-6.200-1z" /></svg></Launcher>
          <Launcher aria-label="Task view"><svg width="12" height="12" viewBox="0 0 12 12" fill="none" stroke="#d8d8dc"><path d="M1 0v2.500h6V0M1 12V9.500h6V12M1 4.500h6v3H1zM10 0v12M9 4h2" /></svg></Launcher>
          <Launcher aria-label="Files"><svg width="15" height="12" viewBox="0 0 15 12"><path d="M0 0h5l2 2h8v10H0z" fill="#f3cf6a" /><path d="M0 4h15v8H0z" fill="#fbe39a" /><path d="M3 12V7h9v5H9.500V9.500h-4V12z" fill="#3f9bd8" /></svg></Launcher>
          <Launcher aria-label="Chrome"><svg width="15" height="15" viewBox="0 0 16 16"><circle cx="8" cy="8" r="8" fill="#f4c20d" /><path d="M8 8L1.100 4A8 8 0 0 1 14.900 4z" fill="#db4437" /><path d="M8 8L1.100 4A8 8 0 0 0 8 16z" fill="#0f9d58" /><circle cx="8" cy="8" r="3.800" fill="#fff" /><circle cx="8" cy="8" r="3" fill="#4285f4" /></svg></Launcher>
          <Task>
            <svg width="16" height="15" viewBox="0 0 16 15"><circle cx="9" cy="7.500" r="7" fill="#dd6a45" /><rect y="3" width="9" height="9" fill="#b8391f" /><path d="M3.500 10V5h1.800a1.500 1.500 0 0 1 0 3H3.500" stroke="#fff" fill="none" /></svg>
            ObserVIEW 2020.2 ...
          </Task>
          <Task>
            <svg width="16" height="12" viewBox="0 0 16 12" fill="none" stroke="#d8232e"><path d="M1 4.500h4.500" strokeWidth="2" /><path d="M6 2L3.500 11L9.500 1L8 11L14.500 1L12.500 9" strokeWidth="2.600" /></svg>
            VibrationVIEW 2020...
          </Task>
          <Task $active>
            <svg width="16" height="15" viewBox="0 0 16 15"><path d="M3 0l3.500 3L8.500 15 3 3z" fill="#e2323c" /><path d="M14 0l-3.500 3-3.500 6 1.500 6L14 3z" fill="#b81a26" /></svg>
            ObserVIEW - Live A...
          </Task>
          <Task>
            <svg width="16" height="16" viewBox="0 0 16 16"><rect width="16" height="16" rx="2" fill="#e2574c" /><path d="M13 4H5.500L4 5.500v5L5.500 12H13" fill="none" stroke="#fff" strokeWidth="2.200" /></svg>
            Recording...
          </Task>
          <Tray>
            <ToolCell aria-label="Hidden icons"><svg width="5" height="4" viewBox="0 0 5 4" fill="none" stroke="#ccc"><path d="M0.500 3l2-2 2 2" /></svg></ToolCell>
            <svg width="11" height="8" viewBox="0 0 11 8"><path d="M2.500 8a2.500 2.500 0 0 1 0-5 3.500 3.500 0 0 1 6.300 0A2.500 2.500 0 0 1 9 8z" fill="#f2f2f4" /></svg>
            <ToolCell aria-label="Network"><svg width="11" height="10" viewBox="0 0 11 10" fill="none" stroke="#d8d8dc"><path d="M3 2h7.500v5H3zM5 9.500h4M7 7v2M0.500 0v3h2V0M1.500 3v6.500H4" /></svg></ToolCell>
            <svg width="11" height="10" viewBox="0 0 11 10" fill="none" stroke="#d8d8dc"><path d="M.5 3.500h2L5 1v8L2.500 6.500h-2zM6.500 3.500q1 1.500 0 3M8 2q2 3 0 6M9.500 1q2 4 0 8" /></svg>
            <Clock>4:05 PM<br />7/30/2020</Clock>
            <Bell aria-label="Notifications"><svg width="16" height="17" viewBox="0 0 16 17" fill="none"><path d="M1 1h11v9H6l-2 2v-2H1z" fill="#f2f2f4" /><path d="M3 3.500h7M3 5.500h7M3 7.500h4" stroke="#222" /><circle cx="11" cy="11.500" r="4.500" fill="#2a2a2d" stroke="#9a9a9e" /><path d="M10 10l1.200-1v5" stroke="#eee" /></svg></Bell>
            <ShowDesktop aria-label="Show desktop" />
          </Tray>
        </TaskBar>
      </Shell>
    </>
  );
}
